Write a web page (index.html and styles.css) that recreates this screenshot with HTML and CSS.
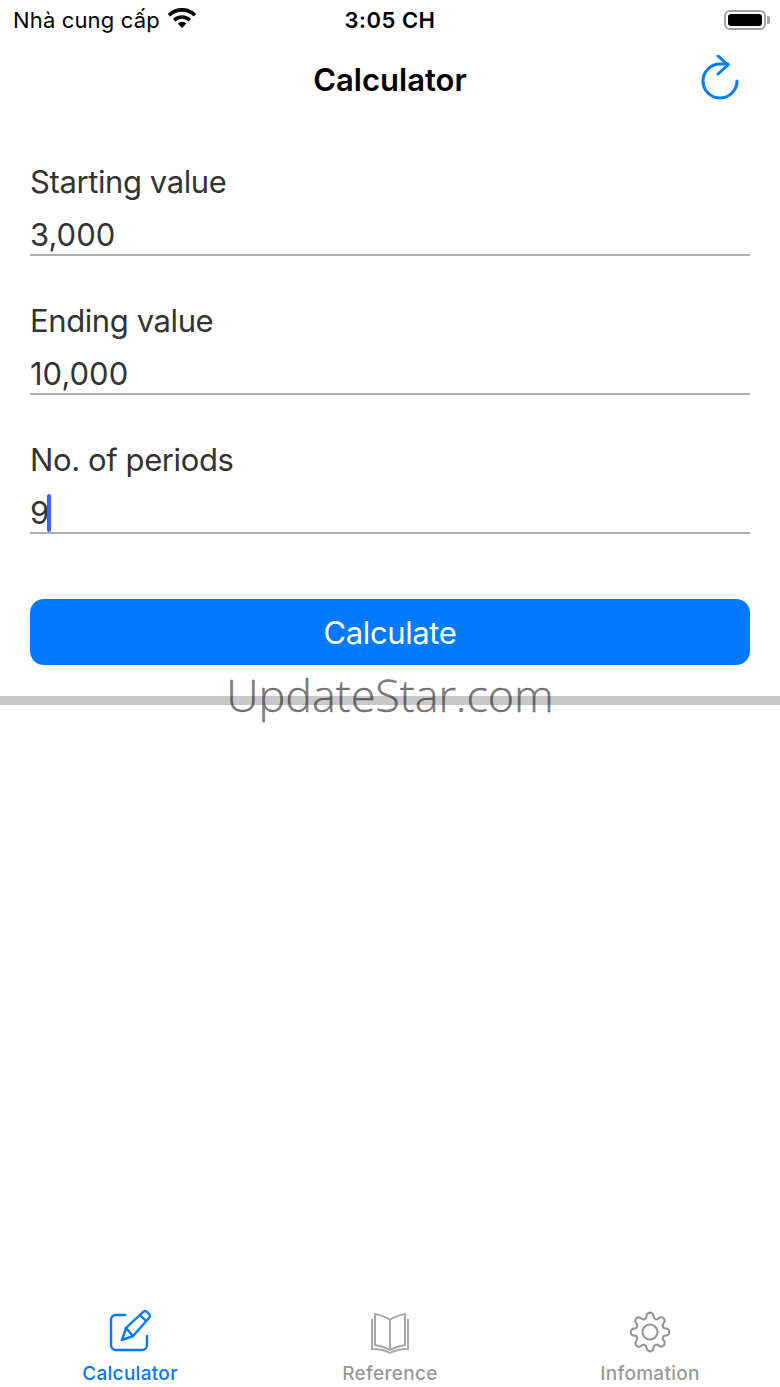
FILE: index.html
```html
<!doctype html>
<html lang="en">
  <head>
    <meta charset="UTF-8" />
    <meta name="viewport" content="width=device-width, initial-scale=1.0" />
    <title>Calculator</title>
    <link rel="stylesheet" href="styles.css">
  </head>
  <body>
    <div class="status-bar">
      <div class="carrier">
        <span>Nhà cung cấp</span>
        <svg class="wifi" viewBox="0 0 30 22" fill="none" stroke="#000" stroke-width="3.6">
          <path d="M2 8.2a18.6 18.6 0 0 1 26 0"/>
          <path d="M7.2 13.2a11.2 11.2 0 0 1 15.6 0"/>
          <path d="M15 21l-4.300-4.400a6.100 6.100 0 0 1 8.600 0z" fill="#000" stroke="none"/>
        </svg>
      </div>
      <div class="clock">3:05 CH</div>
      <div class="battery-wrap">
        <div class="battery"><div class="battery-level"></div></div>
        <div class="battery-cap"></div>
      </div>
    </div>

    <div class="nav-bar">
      <h1>Calculator</h1>
      <svg class="refresh" viewBox="0 0 40 46" fill="none" stroke="#007aff" stroke-width="3" stroke-linecap="round" stroke-linejoin="round">
        <path d="M37 26a17 17 0 1 1-17-17h8"/>
        <path d="M18 1l10 9-10 9"/>
      </svg>
    </div>

    <div class="form">
      <div class="field">
        <label>Starting value</label>
        <div class="value">3,000</div>
      </div>
      <div class="field">
        <label>Ending value</label>
        <div class="value">10,000</div>
      </div>
      <div class="field">
        <label>No. of periods</label>
        <div class="value">9<span class="caret"></span></div>
      </div>
      <button class="button">Calculate</button>
    </div>

    <div class="band"></div>
    <div class="watermark">UpdateStar.com</div>

    <div class="tab-bar">
      <div class="tab active">
        <svg viewBox="0 0 44 44" fill="none" stroke="#007aff" stroke-width="2.400" stroke-linecap="round" stroke-linejoin="round">
          <path d="M17 5H8a5 5 0 0 0-5 5v25a5 5 0 0 0 5 5h26a5 5 0 0 0 5-5v-9"/>
          <path d="M14 30l4-12L35 2a3 3 0 0 1 4 0l2 2a3 3 0 0 1 0 4L25 26z"/>
          <path d="M18 18l7 8M32 5l6 6"/>
        </svg>
        <span>Calculator</span>
      </div>
      <div class="tab">
        <svg viewBox="0 0 44 44" fill="none" stroke="#a8a8a8" stroke-width="2" stroke-linejoin="round">
          <path d="M22 10C17 6 11 5 7 4v31c5 1 10 2 15 5 5-3 10-4 15-5V4c-4 1-10 2-15 6z"/>
          <path d="M22 10v30"/>
          <path d="M4 9v30c6 0 13 1 18 4 5-3 12-4 18-4V9"/>
        </svg>
        <span>Reference</span>
      </div>
      <div class="tab">
        <svg viewBox="-0.5 -0.5 25 25" fill="none" stroke="#969696" stroke-width="1.200" stroke-linejoin="round">
          <circle cx="12" cy="12" r="4.300"/>
          <path d="M19.400 15a1.650 1.650 0 0 0 .33 1.820l.06.06a2 2 0 0 1 0 2.830 2 2 0 0 1-2.830 0l-.06-.06a1.650 1.650 0 0 0-1.820-.33 1.650 1.650 0 0 0-1 1.510V21a2 2 0 0 1-2 2 2 2 0 0 1-2-2v-.09A1.650 1.650 0 0 0 9 19.400a1.650 1.650 0 0 0-1.820.33l-.06.06a2 2 0 0 1-2.830 0 2 2 0 0 1 0-2.830l.06-.06a1.650 1.650 0 0 0 .33-1.820 1.650 1.650 0 0 0-1.510-1H3a2 2 0 0 1-2-2 2 2 0 0 1 2-2h.09A1.650 1.650 0 0 0 4.600 9a1.650 1.650 0 0 0-.33-1.820l-.06-.06a2 2 0 0 1 0-2.830 2 2 0 0 1 2.830 0l.06.06a1.650 1.650 0 0 0 1.820.33H9a1.650 1.650 0 0 0 1-1.510V3a2 2 0 0 1 2-2 2 2 0 0 1 2 2v.09a1.650 1.650 0 0 0 1 1.510 1.650 1.650 0 0 0 1.820-.33l.06-.06a2 2 0 0 1 2.830 0 2 2 0 0 1 0 2.830l-.06.06a1.650 1.650 0 0 0-.33 1.820V9a1.650 1.650 0 0 0 1.510 1H21a2 2 0 0 1 2 2 2 2 0 0 1-2 2h-.09a1.650 1.650 0 0 0-1.510 1z"/>
        </svg>
        <span>Infomation</span>
      </div>
    </div>
  </body>
</html>
```

FILE: styles.css
```css
* {
  margin: 0;
  padding: 0;
  box-sizing: border-box;
}

body {
  position: relative;
  height: 1387px;
  overflow: hidden;
  display: flex;
  flex-direction: column;
  font-family: Inter, "Liberation Sans", sans-serif;
  background: white;
  color: #333;
}

.status-bar {
  height: 40px;
  padding: 0 10px 0 13px;
  display: grid;
  grid-template-columns: 1fr auto 1fr;
  align-items: center;
  color: black;
}

.carrier {
  display: flex;
  align-items: center;
  gap: 7px;
  font-size: 22px;
  letter-spacing: 0.15px;
}

.wifi {
  width: 30px;
  height: 22px;
  margin-top: -4px;
}

.clock {
  font-size: 22px;
  font-weight: 600;
  letter-spacing: 0.5px;
  padding-right: 3px;
}

.battery-wrap {
  display: flex;
  align-items: center;
  justify-content: flex-end;
  gap: 1px;
}

.battery {
  width: 42px;
  height: 20px;
  padding: 2px;
  border: 2px solid #a3a3a3;
  border-radius: 6px;
}

.battery-level {
  height: 100%;
  background: black;
  border-radius: 3px;
}

.battery-cap {
  width: 3px;
  height: 8px;
  background: #a3a3a3;
  border-radius: 0 2px 2px 0;
}

.nav-bar {
  position: relative;
  height: 80px;
  padding-bottom: 2px;
  display: flex;
  align-items: center;
  justify-content: center;
}

h1 {
  font-size: 31px;
  font-weight: 600;
  color: black;
}

.refresh {
  position: absolute;
  top: 15px;
  left: 700px;
  width: 40px;
  height: 46px;
}

.form {
  padding: 0 30px;
  display: flex;
  flex-direction: column;
}

.field {
  height: 139px;
  padding-top: 2px;
  display: flex;
  flex-direction: column;
  justify-content: flex-end;
  padding-bottom: 5px;
}

.field:first-child {
  height: 141px;
}

label {
  font-size: 31px;
  line-height: 38px;
  letter-spacing: -0.4px;
  margin-bottom: 15px;
}

.value {
  height: 40px;
  line-height: 38px;
  font-size: 31px;
  border-bottom: 2px solid #b0b0b0;
  display: flex;
  align-items: center;
}

.caret {
  width: 4px;
  height: 38px;
  margin-left: -2px;
  background: #3d5ef5;
  border-radius: 2px;
}

.button {
  height: 66px;
  margin-top: 60px;
  border: none;
  border-radius: 14px;
  background: #007aff;
  color: white;
  font-family: inherit;
  font-size: 31px;
  letter-spacing: -0.4px;
}

.band {
  position: absolute;
  top: 696px;
  left: 0;
  right: 0;
  height: 9px;
  background: #c8c8c8;
}

.watermark {
  position: absolute;
  top: 666px;
  left: 0;
  right: 0;
  text-align: center;
  font-family: "Open Sans", sans-serif;
  font-weight: 300;
  font-size: 45px;
  line-height: 58px;
  letter-spacing: -0.1px;
  color: rgba(0, 0, 0, 0.5);
  -webkit-text-stroke: 0.4px rgba(0, 0, 0, 0.5);
}

.tab-bar {
  margin-top: auto;
  height: 77px;
  display: grid;
  grid-template-columns: repeat(3, 1fr);
}

.tab {
  display: flex;
  flex-direction: column;
  align-items: center;
  font-size: 19px;
  font-weight: 500;
  letter-spacing: 0.3px;
  color: #999;
}

.tab.active {
  color: #007aff;
}

.tab svg {
  width: 44px;
  height: 44px;
  flex-shrink: 0;
}

.tab span {
  margin-top: 8px;
  line-height: 24px;
}
```
